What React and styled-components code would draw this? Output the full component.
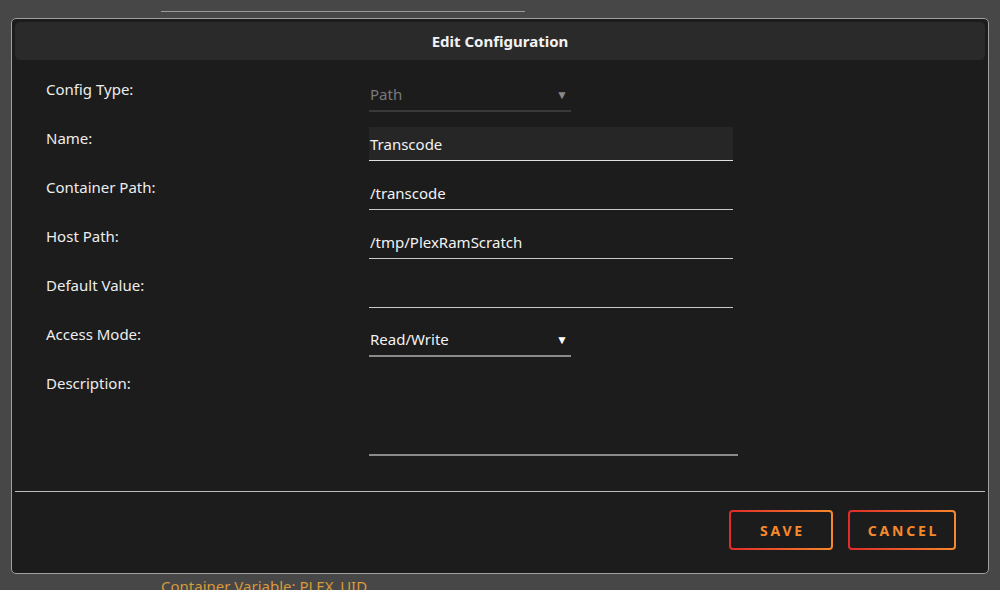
import React from 'react';
import styled, { createGlobalStyle } from 'styled-components';

const GlobalStyle = createGlobalStyle`
  html, body {
    margin: 0;
    padding: 0;
    background: #474747;
    font-family: "Noto Sans", "Open Sans", sans-serif;
    overflow: hidden;
  }
`;

const Page = styled.div`
  width: 1000px;
  height: 590px;
  overflow: hidden;
`;

const BackField = styled.div`
  margin-left: 161px;
  width: 364px;
  height: 11px;
  border-bottom: 1px solid #9a9a9a;
`;

const Modal = styled.div`
  margin: 6px 11px 0 11px;
  height: 556px;
  box-sizing: border-box;
  background: #1c1c1c;
  border: 1px solid #a0a0a0;
  border-radius: 5px;
  padding: 3px;
  display: flex;
  flex-direction: column;
`;

const Header = styled.div`
  height: 38px;
  flex-shrink: 0;
  background: #2a2a2a;
  border-radius: 5px;
  display: flex;
  align-items: center;
  justify-content: center;
  color: #f2f2f2;
  font-size: 15px;
  font-weight: 700;
`;

const Form = styled.div`
  padding: 18px 0 0 31px;
  display: flex;
  flex-direction: column;
  gap: 15px;
  flex: 1;
`;

const Row = styled.div`
  display: grid;
  grid-template-columns: 323px 1fr;
  align-items: start;
`;

const Label = styled.div`
  color: #ededed;
  font-size: 15px;
  line-height: 22px;
`;

const Field = styled.div`
  width: ${({ w }) => w}px;
  height: ${({ h }) => h || 34}px;
  box-sizing: border-box;
  background: ${({ focused }) => (focused ? '#262626' : 'transparent')};
  border-bottom: ${({ line }) => line || '1px solid #c8c8c8'};
  display: flex;
  align-items: center;
  justify-content: space-between;
  padding: 0 3px 0 1px;
  color: ${({ dim }) => (dim ? '#7a7a7a' : '#f2f2f2')};
  font-size: 15px;
`;

const Arrow = styled.span`
  font-size: 12px;
  color: ${({ dim }) => (dim ? '#8a8a8a' : '#ffffff')};
`;

const Divider = styled.div`
  height: 1px;
  flex-shrink: 0;
  background: #bdbdbd;
`;

const Footer = styled.div`
  display: flex;
  justify-content: flex-end;
  gap: 15px;
  padding: 18px 29px 0 0;
  height: 78px;
  flex-shrink: 0;
  box-sizing: border-box;
`;

const Button = styled.button`
  width: ${({ w }) => w}px;
  height: 40px;
  border: 2px solid transparent;
  border-radius: 4px;
  background:
    linear-gradient(#1c1c1c, #1c1c1c) padding-box,
    linear-gradient(90deg, #e22a2a, #f7892b) border-box;
  color: #f7892b;
  font-family: "Noto Sans", "Open Sans", sans-serif;
  font-size: 14px;
  font-weight: 700;
  letter-spacing: 2.8px;
  padding: 0 0 0 3px;
`;

const Caption = styled.div`
  margin: 3px 0 0 161px;
  color: #d89a3a;
  font-size: 15px;
  line-height: 18px;
`;

const rows = [
  { label: 'Config Type:', value: 'Path', w: 202, select: true, dim: true, line: '2px solid #3a3a3a' },
  { label: 'Name:', value: 'Transcode', w: 364, focused: true, line: '1px solid #e0e0e0' },
  { label: 'Container Path:', value: '/transcode', w: 364 },
  { label: 'Host Path:', value: '/tmp/PlexRamScratch', w: 364 },
  { label: 'Default Value:', value: '', w: 364 },
  { label: 'Access Mode:', value: 'Read/Write', w: 202, select: true, line: '2px solid #8a8a8a' },
];

export default function App() {
  return (
    <Page>
      <GlobalStyle />
      <BackField />
      <Modal>
        <Header>Edit Configuration</Header>
        <Form>
          {rows.map((r) => (
            <Row key={r.label}>
              <Label>{r.label}</Label>
              <Field w={r.w} focused={r.focused} dim={r.dim} line={r.line}>
                <span>{r.value}</span>
                {r.select && <Arrow dim={r.dim}>▼</Arrow>}
              </Field>
            </Row>
          ))}
          <Row>
            <Label>Description:</Label>
            <Field w={369} h={84} line="2px solid #8a8a8a" />
          </Row>
        </Form>
        <Divider />
        <Footer>
          <Button w={104}>SAVE</Button>
          <Button w={108}>CANCEL</Button>
        </Footer>
      </Modal>
      <Caption>Container Variable: PLEX_UID</Caption>
    </Page>
  );
}
